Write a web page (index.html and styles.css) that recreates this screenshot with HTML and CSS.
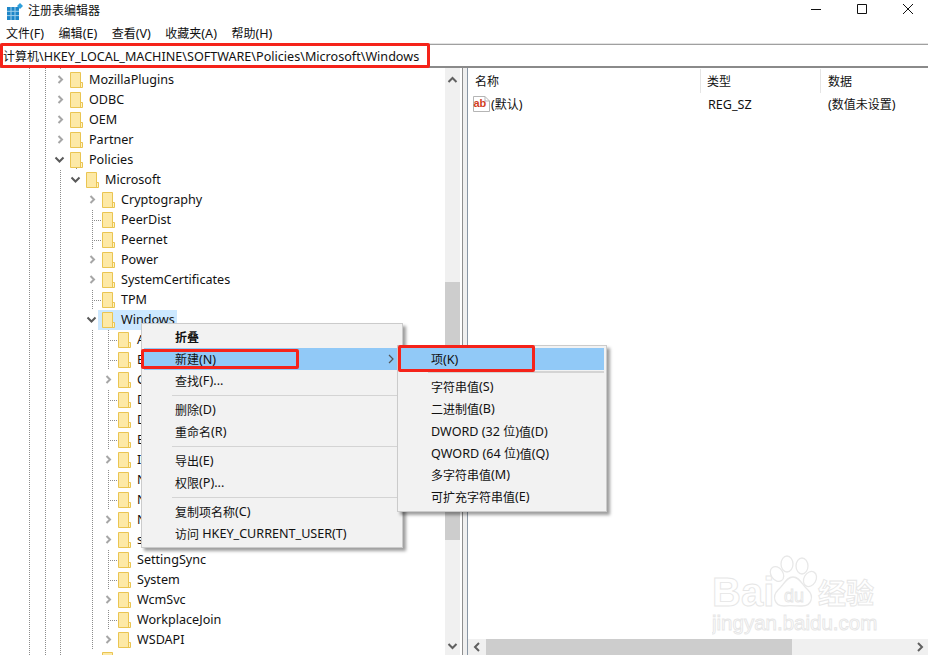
FILE: index.html
```html
<!DOCTYPE html>
<html lang="zh-CN">
<head>
<meta charset="utf-8">
<title>注册表编辑器</title>
<link rel="stylesheet" href="styles.css">
</head>
<body>
<svg class="defs" width="0" height="0" aria-hidden="true">
  <symbol id="folder" viewBox="0 0 13 16">
    <path d="M.5.5H10.5V10.5H12.5V15.5H.5Z" fill="#fde9a6" stroke="#eac552"/>
    <path d="M1 1H10V11H1Z" fill="#fde9a6"/>
    <path d="M10.5 1V10.5M10.5 10.5V15.5" stroke="#eac552" fill="none"/>
    <path d="M11 11H12V15H11Z" fill="#fff3c6"/>
  </symbol>
  <symbol id="cr" viewBox="0 0 16 20"><path d="M4.500 6L8 9.500L4.500 13" fill="none" stroke="#a6a6a6" stroke-width="2"/></symbol>
  <symbol id="cd" viewBox="0 0 16 20"><path d="M1.500 7.500L5.500 11.500L9.500 7.500" fill="none" stroke="#595959" stroke-width="2"/></symbol>
</svg>
<div class="window">
  <header class="titlebar">
    <svg class="appicon" width="16" height="18" viewBox="0 0 16 18">
      <path d="M0 4H12V17H0Z" fill="#1e86c8"/>
      <path d="M4 4V17M8 4V17M0 8.300H12M0 12.600H12" stroke="#9fd0ec" stroke-width="1"/>
      <path d="M13 0L16 3L13 6L10 3Z" fill="#2fa0dc"/>
    </svg>
    <span class="apptitle">注册表编辑器</span>
    <div class="winctl">
      <svg width="12" height="12" viewBox="0 0 12 12"><path d="M1 6.500H11" stroke="#111"/></svg>
      <svg width="12" height="12" viewBox="0 0 12 12"><path d="M1.500 1.500H10.500V10.500H1.500Z" fill="none" stroke="#111"/></svg>
      <svg width="12" height="12" viewBox="0 0 12 12"><path d="M1 1L11 11M11 1L1 11" stroke="#111"/></svg>
    </div>
  </header>
  <nav class="menubar">
    <span><span class="c">文件</span>(F)</span>
    <span><span class="c">编辑</span>(E)</span>
    <span><span class="c">查看</span>(V)</span>
    <span><span class="c">收藏夹</span>(A)</span>
    <span><span class="c">帮助</span>(H)</span>
  </nav>
  <div class="address"><span class="c">计算机</span>\HKEY_LOCAL_MACHINE\SOFTWARE\Policies\Microsoft\Windows</div>
  <main class="main">
    <div class="tree">
      <div class="row l0"><svg class="tw"><use href="#cr"/></svg><svg class="fd"><use href="#folder"/></svg><span>MozillaPlugins</span></div>
      <div class="row l0"><svg class="tw"><use href="#cr"/></svg><svg class="fd"><use href="#folder"/></svg><span>ODBC</span></div>
      <div class="row l0"><svg class="tw"><use href="#cr"/></svg><svg class="fd"><use href="#folder"/></svg><span>OEM</span></div>
      <div class="row l0"><svg class="tw"><use href="#cr"/></svg><svg class="fd"><use href="#folder"/></svg><span>Partner</span></div>
      <div class="row l0"><svg class="tw"><use href="#cd"/></svg><svg class="fd"><use href="#folder"/></svg><span>Policies</span></div>
      <div class="row l1"><svg class="tw"><use href="#cd"/></svg><svg class="fd"><use href="#folder"/></svg><span>Microsoft</span></div>
      <div class="row l2"><svg class="tw"><use href="#cr"/></svg><svg class="fd"><use href="#folder"/></svg><span>Cryptography</span></div>
      <div class="row l2"><i class="stub"></i><svg class="fd"><use href="#folder"/></svg><span>PeerDist</span></div>
      <div class="row l2"><i class="stub"></i><svg class="fd"><use href="#folder"/></svg><span>Peernet</span></div>
      <div class="row l2"><svg class="tw"><use href="#cr"/></svg><svg class="fd"><use href="#folder"/></svg><span>Power</span></div>
      <div class="row l2"><svg class="tw"><use href="#cr"/></svg><svg class="fd"><use href="#folder"/></svg><span>SystemCertificates</span></div>
      <div class="row l2"><i class="stub"></i><svg class="fd"><use href="#folder"/></svg><span>TPM</span></div>
      <div class="row l2"><svg class="tw"><use href="#cd"/></svg><div class="sel"><svg class="fd"><use href="#folder"/></svg><span>Windows</span></div></div>
      <div class="row l3"><i class="stub"></i><svg class="fd"><use href="#folder"/></svg><span>Appx</span></div>
      <div class="row l3"><i class="stub"></i><svg class="fd"><use href="#folder"/></svg><span>BITS</span></div>
      <div class="row l3"><svg class="tw"><use href="#cr"/></svg><svg class="fd"><use href="#folder"/></svg><span>CurrentVersion</span></div>
      <div class="row l3"><i class="stub"></i><svg class="fd"><use href="#folder"/></svg><span>DataCollection</span></div>
      <div class="row l3"><i class="stub"></i><svg class="fd"><use href="#folder"/></svg><span>DeliveryOptimization</span></div>
      <div class="row l3"><i class="stub"></i><svg class="fd"><use href="#folder"/></svg><span>EnhancedStorageDevices</span></div>
      <div class="row l3"><svg class="tw"><use href="#cr"/></svg><svg class="fd"><use href="#folder"/></svg><span>IPSec</span></div>
      <div class="row l3"><i class="stub"></i><svg class="fd"><use href="#folder"/></svg><span>NetCache</span></div>
      <div class="row l3"><i class="stub"></i><svg class="fd"><use href="#folder"/></svg><span>NetworkProvider</span></div>
      <div class="row l3"><svg class="tw"><use href="#cr"/></svg><svg class="fd"><use href="#folder"/></svg><span>NetworkConnectivity</span></div>
      <div class="row l3"><svg class="tw"><use href="#cr"/></svg><svg class="fd"><use href="#folder"/></svg><span>safer</span></div>
      <div class="row l3"><i class="stub"></i><svg class="fd"><use href="#folder"/></svg><span>SettingSync</span></div>
      <div class="row l3"><i class="stub"></i><svg class="fd"><use href="#folder"/></svg><span>System</span></div>
      <div class="row l3"><svg class="tw"><use href="#cr"/></svg><svg class="fd"><use href="#folder"/></svg><span>WcmSvc</span></div>
      <div class="row l3"><i class="stub"></i><svg class="fd"><use href="#folder"/></svg><span>WorkplaceJoin</span></div>
      <div class="row l3"><svg class="tw"><use href="#cr"/></svg><svg class="fd"><use href="#folder"/></svg><span>WSDAPI</span></div>
      <div class="row l2 last"><i class="blank"></i><svg class="fd"><use href="#folder"/></svg><span>Windows Advanced Threat Protection</span></div>
    </div>
    <div class="vscroll">
      <svg width="15" height="21" viewBox="0 0 15 21"><path d="M3.500 14L7.500 10L11.500 14" fill="none" stroke="#606060" stroke-width="2"/></svg>
      <div class="vspace"></div>
      <div class="vthumb"></div>
      <div class="grow"></div>
      <svg width="15" height="16" viewBox="0 0 15 16"><path d="M3.500 5L7.500 9L11.500 5" fill="none" stroke="#606060" stroke-width="2"/></svg>
    </div>
    <div class="splitter"></div>
    <section class="list">
      <div class="lhead">
        <span class="col c1"><span class="c">名称</span></span>
        <span class="col c2"><span class="c">类型</span></span>
        <span class="col c3"><span class="c">数据</span></span>
      </div>
      <div class="lrow">
        <div class="cell c1 named">
          <svg width="17" height="16" viewBox="0 0 17 16"><path d="M.5.500H12L16.500 5V15.500H.5Z" fill="#fff" stroke="#b5b5b5"/><path d="M12 .5V5H16.500" fill="none" stroke="#b5b5b5"/><text x="0.500" y="10.500" class="abtext">ab</text></svg>
          <span>(<span class="c">默认</span>)</span>
        </div>
        <div class="cell c2 lat">REG_SZ</div>
        <div class="cell c3">(<span class="c">数值未设置</span>)</div>
      </div>
      <div class="grow watermark-host">
        <svg class="watermark" width="170" height="82" viewBox="0 0 170 82">
          <text x="0" y="52" class="wm wm-big">Bai</text>
          <g fill="#fff" stroke="#e8e8e8" stroke-width="1.300">
            <ellipse cx="65" cy="20" rx="6" ry="8" transform="rotate(-35 65 20)"/>
            <ellipse cx="75" cy="10" rx="6" ry="8"/>
            <ellipse cx="90" cy="12" rx="6" ry="8"/>
            <ellipse cx="98" cy="25" rx="6" ry="8" transform="rotate(30 98 25)"/>
            <path d="M81 23C88 23 90 31 96 36C102 42 100 52 90 52C84 52 78 51 72 52C62 52 60 42 66 36C72 31 74 23 81 23Z"/>
          </g>
          <text x="72" y="48" class="wm wm-du">du</text>
          <text x="106" y="50" class="wm wm-cn">经验</text>
          <text x="0" y="76" class="wm wm-url">jingyan.baidu.com</text>
        </svg>
      </div>
      <div class="hscroll">
        <svg width="18" height="16" viewBox="0 0 18 16"><path d="M11 4L7 8L11 12" fill="none" stroke="#606060" stroke-width="2"/></svg>
        <div class="hthumb"></div>
        <div class="grow"></div>
        <svg width="16" height="16" viewBox="0 0 16 16"><path d="M6 4L10 8L6 12" fill="none" stroke="#606060" stroke-width="2"/></svg>
      </div>
    </section>
  </main>

  <div class="menu ctx">
    <div class="mi strong"><span class="c">折叠</span></div>
    <div class="mi hot"><span><span class="c">新建</span>(N)</span><svg width="6" height="10" viewBox="0 0 6 10"><path d="M1 1L5 5L1 9" fill="none" stroke="#555" stroke-width="1.200"/></svg></div>
    <div class="mi"><span class="c">查找</span>(F)...</div>
    <div class="sep"></div>
    <div class="mi"><span class="c">删除</span>(D)</div>
    <div class="mi"><span class="c">重命名</span>(R)</div>
    <div class="sep"></div>
    <div class="mi"><span class="c">导出</span>(E)</div>
    <div class="mi"><span class="c">权限</span>(P)...</div>
    <div class="sep"></div>
    <div class="mi"><span class="c">复制项名称</span>(C)</div>
    <div class="mi"><span class="c">访问</span> HKEY_CURRENT_USER(T)</div>
  </div>
  <div class="menu sub">
    <div class="mi hot"><span><span class="c">项</span>(K)</span></div>
    <div class="sep"></div>
    <div class="mi"><span class="c">字符串值</span>(S)</div>
    <div class="mi"><span class="c">二进制值</span>(B)</div>
    <div class="mi lat">DWORD (32 <span class="c">位</span>)<span class="c">值</span>(D)</div>
    <div class="mi lat">QWORD (64 <span class="c">位</span>)<span class="c">值</span>(Q)</div>
    <div class="mi"><span class="c">多字符串值</span>(M)</div>
    <div class="mi"><span class="c">可扩充字符串值</span>(E)</div>
  </div>
  <div class="mark mark-address"></div>
  <div class="mark mark-new"></div>
  <div class="mark mark-key"></div>
</div>
</body>
</html>
```
FILE: styles.css
```css
* { box-sizing: border-box; }
html, body { margin: 0; height: 100%; overflow: hidden; background: #fff; }
body { font: 12.6px/20px "Noto Sans", "Noto Sans CJK SC", sans-serif; color: #111; }
.defs { position: absolute; }
.c { font-family: "Noto Sans CJK SC", sans-serif; font-size: 12px; }
.grow { flex: 1; min-height: 0; min-width: 0; }
.lat { padding-top: 1px; }

.window { position: relative; width: 928px; height: 655px; display: flex; flex-direction: column; overflow: hidden; }

.titlebar { height: 23px; flex: none; display: flex; align-items: center; padding-left: 7px; }
.appicon { flex: none; }
.apptitle { margin-left: 5px; font-family: "Noto Sans CJK SC", sans-serif; font-size: 12px; margin-top: -3px; }
.winctl { margin-left: auto; display: flex; gap: 34px; padding-right: 14px; margin-top: -5px; }

.menubar { height: 21px; flex: none; display: flex; gap: 14.5px; padding-left: 6px; align-items: center; }

.address { height: 24px; flex: none; padding-left: 3px; line-height: 22px; border-top: 1px solid #a0a0a0; border-bottom: 2px solid #8a8a8a; white-space: nowrap; box-shadow: 0 -1px 0 #e3e3e3; }

.main { flex: 1; min-height: 0; display: flex; }

.tree {
  width: 445px; flex: none; overflow: hidden; padding-top: 2px;
  background-color: #fff;
  background-image:
    repeating-linear-gradient(to bottom, #8c8c8c 0 1px, transparent 1px 2px),
    repeating-linear-gradient(to bottom, #8c8c8c 0 1px, transparent 1px 2px),
    repeating-linear-gradient(to bottom, #8c8c8c 0 1px, transparent 1px 2px),
    repeating-linear-gradient(to bottom, #8c8c8c 0 1px, transparent 1px 2px),
    repeating-linear-gradient(to bottom, #8c8c8c 0 1px, transparent 1px 2px),
    repeating-linear-gradient(to bottom, #8c8c8c 0 1px, transparent 1px 2px);
  background-repeat: no-repeat;
  background-size: 1px 100%, 1px 100%, 1px 100%, 1px 6px, 1px 460px, 1px 300px;
  background-position: 29px 0, 45px 0, 60px 0, 76px 100px, 92px 122px, 108px 262px;
}
.row { height: 20px; display: flex; align-items: center; white-space: nowrap; }
.row span { margin-top: -1px; }
.l0 { padding-left: 54px; }
.l1 { padding-left: 70px; }
.l2 { padding-left: 86px; }
.l3 { padding-left: 102px; }
.tw { width: 16px; height: 20px; flex: none; background: #fff; }
.stub { width: 16px; height: 20px; flex: none; background: repeating-linear-gradient(to right, #8c8c8c 0 1px, transparent 1px 2px) 6px 10px / 9px 1px no-repeat; }
.blank { width: 16px; height: 20px; flex: none; }
.fd { width: 13px; height: 16px; flex: none; margin-right: 6px; }
.sel { display: flex; align-items: center; height: 20px; background: #cce8ff; margin-left: -4px; padding: 0 2px 0 4px; }
.last span { margin-top: 1px; }

.vscroll { width: 15px; flex: none; background: #f0f0f0; display: flex; flex-direction: column; }
.vscroll svg { flex: none; display: block; }
.vspace { height: 193px; flex: none; }
.vthumb { height: 258px; flex: none; background: #cdcdcd; }

.splitter { width: 6px; flex: none; margin-left: 2px; background: #f0f0f0; border-left: 1px solid #8f8f8f; border-right: 1px solid #8a97a5; }

.list { flex: 1; min-width: 0; display: flex; flex-direction: column; }
.lhead { height: 26px; flex: none; display: flex; align-items: center; }
.col { height: 24px; line-height: 24px; padding-left: 7px; }
.c1 { width: 233px; flex: none; }
.c2 { width: 120px; flex: none; }
.lhead .c1, .lhead .c2 { border-right: 1px solid #e5e5e5; }
.lhead .c2 { padding-left: 6px; }
.lrow { height: 20px; flex: none; display: flex; align-items: center; white-space: nowrap; }
.cell { padding-left: 7px; }
.named { display: flex; align-items: center; padding-left: 5px; gap: 1px; }
.abtext { font: bold 11px "Liberation Sans", sans-serif; fill: #d1401f; }

.watermark-host { position: relative; }
.watermark { position: absolute; left: 244px; bottom: 3px; }
.wm { fill: #fff; stroke: #e6e6e6; stroke-width: .9px; font-family: "Liberation Sans", sans-serif; }
.wm-big { font-size: 40px; font-weight: bold; }
.wm-du { font-size: 18px; }
.wm-cn { font-size: 28px; font-family: "Noto Sans CJK SC", sans-serif; font-weight: bold; }
.wm-url { font-size: 20.5px; }

.hscroll { height: 16px; flex: none; display: flex; background: #f0f0f0; }
.hscroll svg { flex: none; display: block; }
.hthumb { width: 306px; flex: none; background: #cdcdcd; }

.menu { position: absolute; background: #f2f2f2; border: 1px solid #cbcbcb; box-shadow: 3px 3px 3px rgba(0,0,0,.38); padding: 2px; line-height: 22px; white-space: nowrap; }
.ctx { left: 141px; top: 323px; width: 262px; height: 225px; }
.sub { left: 397px; top: 345px; width: 210px; height: 167px; }
.mi { height: 22px; padding-left: 31px; display: flex; align-items: center; white-space: pre; }
.mi > .c:first-child, .mi > span > .c { margin-top: -1px; }
.strong { font-weight: bold; }
.hot { background: #91c9f7; justify-content: space-between; padding-right: 6px; }
.sep { height: 7px; margin-left: 28px; position: relative; }
.sep::after { content: ""; position: absolute; left: 0; right: 0; top: 3px; height: 1px; background: #d4d4d4; }
.sub .sep { height: 6px; }
.sub .sep::after { top: 1px; height: 2px; }

.mark { position: absolute; border: 3px solid #f5231a; border-radius: 2px; }
.mark-address { left: 0; top: 43px; width: 430px; height: 25px; }
.mark-new { left: 141px; top: 349px; width: 158px; height: 20px; }
.mark-key { left: 398px; top: 345px; width: 137px; height: 27px; }
```
